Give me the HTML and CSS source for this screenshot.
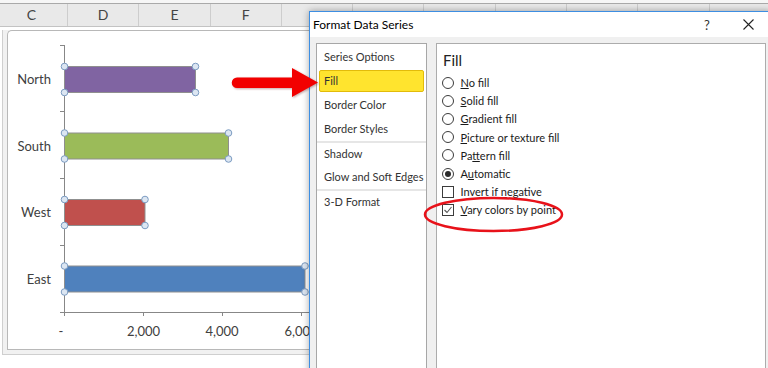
FILE: index.html
```html
<!DOCTYPE html>
<html lang="en">
<head>
    <meta charset="UTF-8">
    <meta name="viewport" content="width=device-width, initial-scale=1.0">
    <title>Format Data Series</title>
    <link rel="stylesheet" href="styles.css">
</head>
<body>
    <div class="sheet">
        <div class="sheet-top"></div>
        <div class="col-head">
            <div class="col first">C</div>
            <div class="col">D</div>
            <div class="col">E</div>
            <div class="col">F</div>
            <!-- columns hidden behind the dialog -->
            <div class="col"></div>
            <div class="col"></div>
            <div class="col"></div>
            <div class="col"></div>
            <div class="col"></div>
            <div class="col"></div>
        </div>
        <div class="chart-frame">
            <div class="chart">
                <svg class="plot" width="340" height="318" viewBox="8 31 340 318">
                    <path class="axis" d="M64.5 45V316 M60 45.5H64 M60 111.5H64 M60 178.5H64 M60 245.5H64 M60 312.5H348 M143.5 312V316 M222.5 312V316 M301.5 312V316"/>

                    <rect class="bar" fill="#8064a2" x="64.5" y="66.5" width="131" height="26"/>
                    <rect class="bar" fill="#9bbb59" x="64.5" y="133" width="164" height="26"/>
                    <rect class="bar" fill="#c0504d" x="64.5" y="199.5" width="80.5" height="26"/>
                    <rect class="bar" fill="#4f81bd" x="64.5" y="266" width="240.5" height="26"/>

                    <g class="handle">
                        <circle cx="64.5" cy="66.5" r="3.3"/><circle cx="195.5" cy="66.5" r="3.3"/>
                        <circle cx="64.5" cy="92.5" r="3.3"/><circle cx="195.5" cy="92.5" r="3.3"/>
                        <circle cx="64.5" cy="133" r="3.3"/><circle cx="228.5" cy="133" r="3.3"/>
                        <circle cx="64.5" cy="159" r="3.3"/><circle cx="228.5" cy="159" r="3.3"/>
                        <circle cx="64.5" cy="199.5" r="3.3"/><circle cx="145" cy="199.5" r="3.3"/>
                        <circle cx="64.5" cy="225.5" r="3.3"/><circle cx="145" cy="225.5" r="3.3"/>
                        <circle cx="64.5" cy="266" r="3.3"/><circle cx="305" cy="266" r="3.3"/>
                        <circle cx="64.5" cy="292" r="3.3"/><circle cx="305" cy="292" r="3.3"/>
                    </g>

                    <g class="cat">
                        <text x="51" y="84">North</text>
                        <text x="51" y="150.5">South</text>
                        <text x="51" y="217">West</text>
                        <text x="51" y="283.5">East</text>
                    </g>
                    <g class="val">
                        <text x="61" y="336">-</text>
                        <text x="143.5" y="336">2,000</text>
                        <text x="222" y="336">4,000</text>
                        <text x="301" y="336">6,000</text>
                    </g>
                </svg>
            </div>
        </div>
    </div>

    <div class="dialog">
        <div class="title-bar">
            <span class="title">Format Data Series</span>
            <span class="help">?</span>
            <svg class="close" width="11" height="11" viewBox="0 0 11 11"><path d="M0.5 0.5L10.5 10.5M10.5 0.5L0.5 10.5"/></svg>
        </div>
        <div class="dialog-body">
            <ul class="nav">
                <li>Series Options</li>
                <li class="active">Fill</li>
                <li>Border Color</li>
                <li>Border Styles</li>
                <li class="group">Shadow</li>
                <li>Glow and Soft Edges</li>
                <li class="group">3-D Format</li>
            </ul>
            <div class="panel">
                <h2>Fill</h2>
                <div class="opt"><span class="radio"></span><span><u>N</u>o fill</span></div>
                <div class="opt"><span class="radio"></span><span><u>S</u>olid fill</span></div>
                <div class="opt"><span class="radio"></span><span><u>G</u>radient fill</span></div>
                <div class="opt"><span class="radio"></span><span><u>P</u>icture or texture fill</span></div>
                <div class="opt"><span class="radio"></span><span>Pa<u>t</u>tern fill</span></div>
                <div class="opt"><span class="radio on"></span><span>A<u>u</u>tomatic</span></div>
                <div class="opt"><span class="check"></span><span>Invert if <u>n</u>egative</span></div>
                <div class="opt"><span class="check">
                    <svg width="10" height="10" viewBox="0 0 10 10"><path d="M1.5 5L4 7.5L8.5 2"/></svg>
                </span><span><u>V</u>ary colors by point</span></div>
            </div>
        </div>
    </div>

    <!-- callouts drawn over the screenshot -->
    <svg class="notes" width="768" height="368" viewBox="0 0 768 368">
        <path class="arrow" d="M237 77.5L292 77.5L292 68L318 82.5L292 97L292 88L237 88A5.25 5.25 0 0 1 237 77.5Z"/>
        <ellipse class="ring" cx="493.5" cy="214.5" rx="68.5" ry="16.5"/>
    </svg>
</body>
</html>
```

FILE: styles.css
```css
* {
  margin: 0;
  padding: 0;
  box-sizing: border-box;
}

body {
  width: 768px;
  height: 368px;
  overflow: hidden;
  position: relative;
  background: #fff;
  font-family: Lato, "Open Sans", sans-serif;
  color: #1e1e1e;
}

/* spreadsheet behind the dialog */
.sheet-top {
  height: 4px;
  background: #f6f6f6;
  border-bottom: 1px solid #a9a9a9;
}

.col-head {
  display: flex;
  height: 23px;
  background: #e9e9e9;
  border-bottom: 1px solid #c3c3c3;
}

.col {
  flex: none;
  width: 71.3px;
  border-right: 1px solid #cdcdcd;
  text-align: center;
  line-height: 22px;
  font-size: 14px;
  color: #444;
}

.col.first {
  width: 68px;
  padding-right: 4px;
}

.chart-frame {
  width: 380px;
  margin: 3px 0 0 2px;
  padding: 0 0 4px 4px;
  border: solid #cfcfcf;
  border-width: 0 0 1px 1px;
  background: #f1f1f1;
}

.chart {
  height: 320px;
  border: 1px solid #b8b8b8;
  border-right: none;
  border-top-left-radius: 5px;
  background: #fff;
  overflow: hidden;
}

.plot {
  display: block;
}

.axis {
  fill: none;
  stroke: #878787;
  stroke-width: 1;
}

.bar {
  stroke: #8f8f8f;
  stroke-width: 1;
}

.handle circle {
  fill: #dce6f2;
  stroke: #7c9cc2;
  stroke-width: 1;
}

.cat text,
.val text {
  font-family: Lato, sans-serif;
  font-size: 13px;
  fill: #404040;
}

.cat text {
  text-anchor: end;
}

.val text {
  text-anchor: middle;
}

/* Format Data Series dialog */
.dialog {
  position: absolute;
  left: 309px;
  top: 11px;
  width: 462px;
  height: 370px;
  border: 1px solid #3d8ee2;
  background: #f0f0f0;
  box-shadow: 0 0 7px rgba(0, 0, 0, 0.35);
}

.title-bar {
  display: flex;
  align-items: center;
  height: 25px;
  padding-left: 3px;
  background: #fff;
  font-size: 12px;
  color: #000;
}

.title {
  flex: 1;
}

.help {
  width: 16px;
  text-align: center;
  font-size: 13px;
  color: #333;
}

.close {
  margin: 0 16px 0 28px;
}

.close path {
  stroke: #222;
  stroke-width: 1.1;
}

.dialog-body {
  display: flex;
  gap: 9px;
  height: calc(100% - 25px);
  padding: 6px 0 0 6px;
}

.nav {
  list-style: none;
  width: 111px;
  padding-top: 1px;
  background: #fff;
  border: 1px solid #a7a7a7;
  font-size: 11px;
  color: #333;
}

.nav li {
  height: 24px;
  line-height: 24px;
  padding-left: 7px;
  white-space: nowrap;
}

.nav li.active {
  height: 22px;
  margin: 1px 2px;
  line-height: 20px;
  padding-left: 4px;
  background: #ffe42e;
  border: 1px solid #e2bb0a;
  border-radius: 2px;
}

.nav li.group {
  border-top: 2px solid #e6e6e6;
  line-height: 22px;
}

.panel {
  width: 330px;
  padding: 6px 0 0 5px;
  background: #fff;
  border: 1px solid #acacac;
}

.panel h2 {
  font-size: 15px;
  font-weight: normal;
  line-height: 20px;
  padding-left: 1px;
  margin-bottom: 3.5px;
  color: #222;
}

.opt {
  display: flex;
  align-items: center;
  gap: 6.5px;
  height: 18.2px;
  font-size: 11px;
  color: #1a1a1a;
}

.radio {
  display: grid;
  place-items: center;
  width: 12px;
  height: 12px;
  border: 1px solid #3c3c3c;
  border-radius: 50%;
  background: #fff;
}

.radio.on::after {
  content: "";
  width: 6px;
  height: 6px;
  border-radius: 50%;
  background: #2b2b2b;
}

.check {
  display: grid;
  place-items: center;
  width: 12px;
  height: 12px;
  border: 1px solid #3c3c3c;
  background: #fff;
}

.check svg path {
  fill: none;
  stroke: #555;
  stroke-width: 1.1;
}

/* red callouts */
.notes {
  position: absolute;
  left: 0;
  top: 0;
  pointer-events: none;
}

.arrow {
  fill: #f20000;
  filter: drop-shadow(1px 1px 1px rgba(90, 0, 0, 0.35));
}

.ring {
  fill: none;
  stroke: #e8121a;
  stroke-width: 2.5;
}
```
